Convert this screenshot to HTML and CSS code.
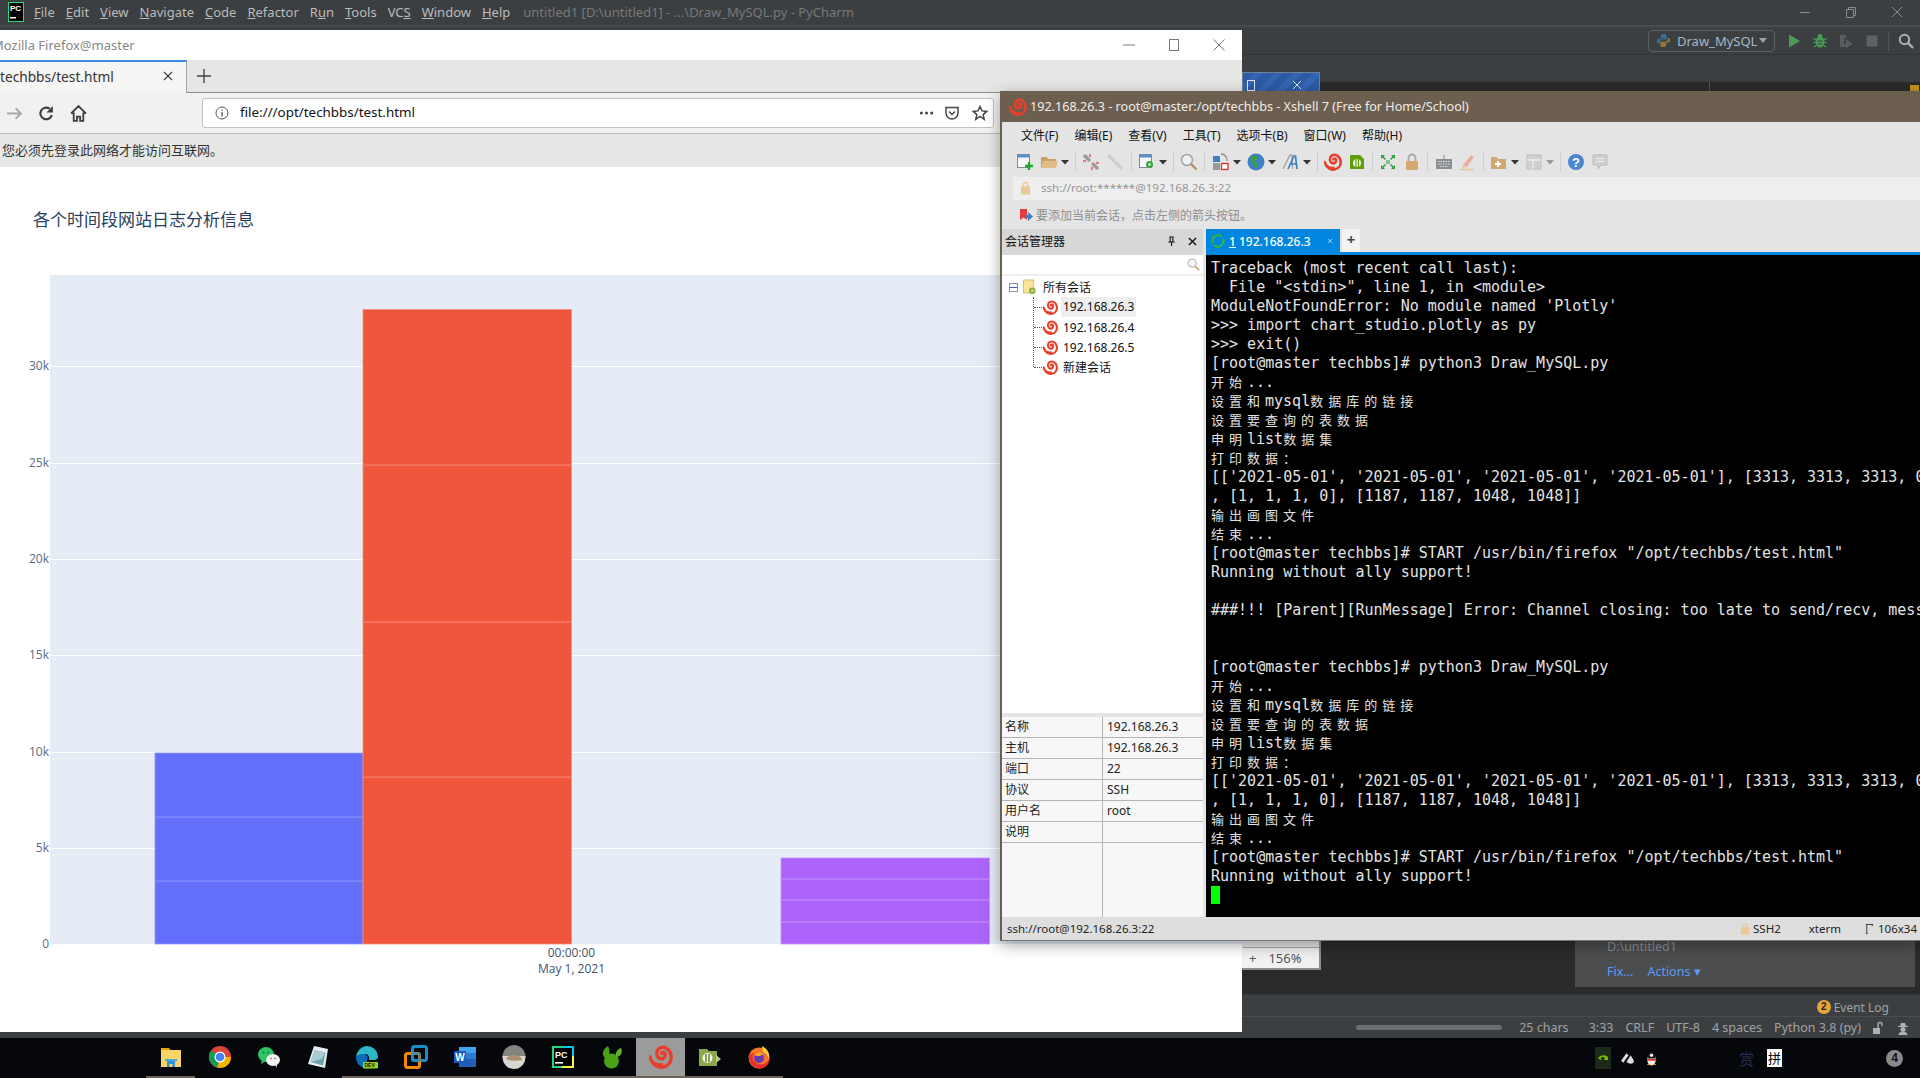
FILE: index.html
```html
<!DOCTYPE html>
<html lang="zh">
<head>
<meta charset="utf-8">
<title>Desktop</title>
<link rel="stylesheet" href="styles.css">
</head>
<body>
<svg class="defs" aria-hidden="true">
  <symbol id="spiral" viewBox="0 0 24 24">
    <path d="M1 12C3 20 9 23 14 22 20 21 23 16 22 10 21 4 15 1 11 3 7 5 7 11 10 13 13 15 17 13 16 9 15.500 7 13 7 12.500 8.500" fill="none" stroke="#e6402c" stroke-width="3.400" stroke-linecap="round"/>
    <path d="M1 12C4 17 9 19 14 18L14 22C8 24 2 19 1 12Z" fill="#e6402c"/>
  </symbol>
  <symbol id="caret" viewBox="0 0 8 8"><path d="M0 2h8L4 6.500Z" fill="#333"/></symbol>
</svg>

<div class="pycharm">
  <header class="pc-menubar">
    <svg class="pc-logo" viewBox="0 0 16 20"><rect x=".5" y=".5" width="15" height="19" fill="#000" stroke="#21d789"/><text x="2" y="9" class="pc-logo-text">PC</text><rect x="2" y="15" width="6" height="1.500" fill="#fff"/></svg>
    <nav class="pc-menu">
      <span><u>F</u>ile</span><span><u>E</u>dit</span><span><u>V</u>iew</span><span><u>N</u>avigate</span><span><u>C</u>ode</span><span><u>R</u>efactor</span><span>R<u>u</u>n</span><span><u>T</u>ools</span><span>VC<u>S</u></span><span><u>W</u>indow</span><span><u>H</u>elp</span>
    </nav>
    <span class="pc-title">untitled1 [D:\untitled1] - ...\Draw_MySQL.py - PyCharm</span>
    <div class="pc-winctl">
      <svg viewBox="0 0 12 12"><path d="M1 6.500h10" stroke="#8a8d8f"/></svg>
      <svg viewBox="0 0 12 12"><path d="M1.500 3.500h7v8h-7zM3.500 3V1.500h7v8H9" fill="none" stroke="#8a8d8f"/></svg>
      <svg viewBox="0 0 12 12"><path d="M1 1l10 10M11 1L1 11" stroke="#8a8d8f"/></svg>
    </div>
  </header>
  <div class="pc-toolbar">
    <div class="run-config">
      <svg class="py-icon" viewBox="0 0 16 16"><path d="M8 1C5 1 5 2.500 5 4v1.500h3.500V6H3C1.500 6 1 7 1 8.500S1.500 11 3 11h1.500V9c0-1.500 1-2 2.500-2h3c1 0 1.500-.5 1.500-1.500V3C11.500 1.500 10 1 8 1Z" fill="#3b6c93"/><path d="M8 15c3 0 3-1.500 3-3v-1.500H7.500V10H13c1.500 0 2-1 2-2.500S14.500 5 13 5h-.5v2c0 1.500-1 2-2.500 2H7c-1 0-2.500.5-2.500 1.500V13c0 1.500 1.500 2 3.500 2Z" fill="#8a7a35"/></svg>
      <span>Draw_MySQL</span>
      <svg class="run-caret" viewBox="0 0 10 6"><path d="M0 0h10L5 6Z" fill="#9da0a2"/></svg>
    </div>
    <svg class="pc-tool" viewBox="0 0 16 16"><path d="M3 1.500l11 6.500-11 6.500Z" fill="#499c54"/></svg>
    <svg class="pc-tool" viewBox="0 0 16 16"><ellipse cx="8" cy="9" rx="4.500" ry="5.500" fill="#499c54"/><circle cx="8" cy="3.500" r="2.500" fill="#499c54"/><path d="M1 5l3 2M15 5l-3 2M1 9.500h3M15 9.500h-3M1.500 14l3-2M14.500 14l-3-2" stroke="#499c54" stroke-width="1.200"/><path d="M5.500 8h5M5.500 11h5" stroke="#3c3f41"/></svg>
    <svg class="pc-tool" viewBox="0 0 16 16"><path d="M2 2h6v3H6v6h2v3H2Z" fill="#5a5d5f"/><path d="M8 6l7 5-7 4Z" fill="#5a5d5f"/></svg>
    <svg class="pc-tool" viewBox="0 0 16 16"><rect x="2.500" y="2.500" width="11" height="11" fill="#5f6163"/></svg>
    <i class="pc-sep"></i>
    <svg class="pc-tool" viewBox="0 0 16 16"><circle cx="6.500" cy="6.500" r="4.700" fill="none" stroke="#afb1b3" stroke-width="2"/><path d="M10 10l5 5" stroke="#afb1b3" stroke-width="2.400"/></svg>
  </div>
  <div class="pc-tabs"></div>
  <div class="pc-editor"><i class="pc-gutter"></i><i class="pc-warn"></i></div>
  <div class="pc-eventbar">
    <span class="event-badge">2</span><span>Event Log</span>
  </div>
  <div class="pc-status">
    <i class="pc-progress"></i>
    <span>25 chars</span><span class="gap-l">3:33</span><span>CRLF</span><span>UTF-8</span><span>4 spaces</span><span>Python 3.8 (py)</span>
    <svg class="pc-stat-icon" viewBox="0 0 14 14"><path d="M3 7h7v6H3z" fill="#afb1b3"/><path d="M8 7V3.500a2 2 0 0 1 4 0V5" fill="none" stroke="#afb1b3" stroke-width="1.400"/></svg>
    <svg class="pc-stat-icon" viewBox="0 0 14 14"><path d="M4 5l1-3h4l1 3h2v1H2V5Z" fill="#afb1b3"/><circle cx="7" cy="8.500" r="2.500" fill="#afb1b3"/><path d="M2.500 14c0-2.500 2-3 4.500-3s4.500.5 4.500 3Z" fill="#afb1b3"/></svg>
  </div>
</div>

<footer class="taskbar">
  <div class="task-icons">
    <div class="task running"><svg viewBox="0 0 24 24"><path d="M2 3h8l2 3H2Z" fill="#e5a50a"/><rect x="2" y="5" width="20" height="17" fill="#fbd466"/><path d="M8 22v-6h8v6h-2.500v-3h-3v3Z" fill="#2f8fd8"/><rect x="6" y="14" width="12" height="2" fill="#48a8ea"/></svg></div>
    <div class="task"><svg viewBox="0 0 24 24"><circle cx="12" cy="12" r="11" fill="#db4437"/><path d="M12 12L2.500 17.500A11 11 0 0 1 3 5.500Z" fill="#0f9d58"/><path d="M12 12h11A11 11 0 0 1 9 22.600Z" fill="#f4b400"/><path d="M12 12L2.500 17.500A11 11 0 0 0 9 22.600Z" fill="#0f9d58"/><circle cx="12" cy="12" r="5.500" fill="#fff"/><circle cx="12" cy="12" r="4.300" fill="#4285f4"/></svg></div>
    <div class="task"><svg viewBox="0 0 24 24"><ellipse cx="9" cy="9.500" rx="8" ry="7.500" fill="#2dc264"/><path d="M5 15l-1 4 4-2.500Z" fill="#2dc264"/><ellipse cx="16" cy="15" rx="7" ry="6" fill="#f2f2f2"/><path d="M18 20l2 3-.5-4Z" fill="#f2f2f2"/><circle cx="6.500" cy="7.500" r="1" fill="#137a3a"/><circle cx="11" cy="7.500" r="1" fill="#137a3a"/><circle cx="14" cy="13.500" r=".9" fill="#888"/><circle cx="18" cy="13.500" r=".9" fill="#888"/></svg></div>
    <div class="task"><svg viewBox="0 0 24 24"><path d="M8 1l14 3-3 19L2 19Z" fill="#e8eef0"/><path d="M8.500 5l11 2.500-2.500 13L4.500 17Z" fill="#6ea5ac"/><path d="M8.500 5l11 2.500-4 6.500L4.500 17Z" fill="#a9cdd2"/></svg></div>
    <div class="task running"><svg viewBox="0 0 24 24"><path d="M12 1a11 11 0 0 1 11 10.500c0 2-1.500 3.500-4 3.500h-5c1-3-1-6-4-6-4 0-8 2-9 3C2 6 6 1 12 1Z" fill="#2bb9c9"/><path d="M1 12c1-2 5-3.500 8-3 4 .5 4 3.500 3 6 0 3 3 6 6 6.500A11 11 0 0 1 1 12Z" fill="#0c6bb8"/><rect x="8" y="17" width="15" height="6.500" rx="1" fill="#8ed81c"/><text x="9.500" y="22.300" class="dev-text">DEV</text></svg></div>
    <div class="task running"><svg viewBox="0 0 24 24"><rect x="8.500" y="1.500" width="14" height="14" rx="2" fill="none" stroke="#1a8ccb" stroke-width="3"/><rect x="1.500" y="8.500" width="14" height="14" rx="2" fill="none" stroke="#f58a07" stroke-width="3"/><path d="M8.500 8.500h7v7h-7z" fill="none" stroke="#1a8ccb" stroke-width="2"/></svg></div>
    <div class="task running"><svg viewBox="0 0 24 24"><path d="M6 2h16a1 1 0 0 1 1 1v18a1 1 0 0 1-1 1H6Z" fill="#1f5fb5"/><path d="M6 8h17v6H6Z" fill="#2b7cd3"/><path d="M6 2h17v6H6Z" fill="#41a5ee"/><rect x="1" y="6" width="12" height="12" fill="#185abd"/><text x="2.300" y="15.800" class="word-text">W</text></svg></div>
    <div class="task running"><svg viewBox="0 0 24 24"><clipPath id="avatar-clip"><ellipse cx="12" cy="12" rx="11.500" ry="12"/></clipPath><g clip-path="url(#avatar-clip)"><rect width="24" height="12" fill="#84847f"/><rect y="11" width="24" height="13" fill="#d8d6d0"/><path d="M4 14c2-4 8-5 13-3 2 1 3 3 3 4-6 1-11 1-16-1Z" fill="#a98f6c"/></g></svg></div>
    <div class="task running"><svg viewBox="0 0 24 24"><path d="M1 1h22v22H1z" fill="#000"/><path d="M1 1h12v2H3v12H1Z" fill="#21d789"/><path d="M13 1h10v10h-2V3h-8Z" fill="#07c3f2"/><path d="M23 11v12H11v-2h10V11Z" fill="#fcf84a"/><path d="M11 23H1V13h2v8h8Z" fill="#21d789"/><text x="4" y="12.500" class="pc-big-text">PC</text><rect x="4" y="17" width="8" height="1.600" fill="#fff"/></svg></div>
    <div class="task running"><svg viewBox="0 0 24 24"><ellipse cx="11.500" cy="16" rx="7.500" ry="7.500" fill="#4aa016"/><path d="M5 13C1 9 3 4 8 1c2 4 2 9-1 12Z" fill="#4aa016"/><path d="M17 12c4-1 6-5 4-9-3 1-6 4-5 8Z" fill="#62b32a"/></svg></div>
    <div class="task running active"><svg viewBox="0 0 24 24"><use href="#spiral"/></svg></div>
    <div class="task running"><svg viewBox="0 0 24 24"><path d="M1 4h8l2 2h8v15H1Z" fill="#8aa84a"/><path d="M18 10l5 4-5 4Z" fill="#b7c98a"/><circle cx="9.500" cy="13" r="5" fill="#f4f4e8"/><path d="M8 9v8M11 9v8" stroke="#6f8a36" stroke-width="1.600"/></svg></div>
    <div class="task running"><svg viewBox="0 0 24 24"><circle cx="12" cy="13" r="10.500" fill="#f4762a"/><path d="M15 1c6 3 8 8 7 13-1-3-3-6-6-7Z" fill="#ffcd3c"/><path d="M2 10C1 16 5 23 12 23.500 19 24 23 18 22.500 13 20 20 12 21 8 17 5 14 5 10 8 8 5 8 3 9 2 10Z" fill="#e8312a"/><circle cx="12" cy="13" r="5" fill="#6a3ab5"/><path d="M8 9c2-2 6-2 8 0l-3 2H9Z" fill="#f4a62a"/></svg></div>
  </div>
  <div class="tray">
    <span class="tray-nv"><svg viewBox="0 0 12 12"><path d="M1 6c2-3 7-4 10-1v3H7c1-1 1-3-1-3S3 7 5 8c-2 0-3-1-4-2Z" fill="#76b900"/></svg></span>
    <svg class="tray-ic" viewBox="0 0 14 14"><path d="M1 9l5-7 2 2-5 7ZM6 10l4-6 3 5c0 3-4 4-7 1Z" fill="#ddd"/></svg>
    <svg class="tray-ic" viewBox="0 0 14 14"><ellipse cx="7" cy="8" rx="4" ry="5.500" fill="#eee"/><path d="M3.500 7c-.5-4 1-6.500 3.500-6.500s4 2.500 3.500 6.500Z" fill="#111"/><path d="M3 7.500h8v1.500H3Z" fill="#e21f1f"/><path d="M2.500 13h3l-1-1.500ZM11.500 13h-3l1-1.500Z" fill="#f5a623"/><circle cx="7" cy="4" r="1.600" fill="#eee"/></svg>
    <span class="tray-cube">赏</span>
    <span class="tray-ime">拼</span>
    <span class="tray-badge">4</span>
  </div>
</footer>

<div class="blue-peek"><i></i><svg viewBox="0 0 10 10"><path d="M1 1l8 8M9 1L1 9" stroke="#dfe6f2"/></svg></div>
<div class="zoom-peek"><span>+</span><span>156%</span></div>
<div class="notify-peek">
  <div class="notify-path">D:\untitled1</div>
  <div class="notify-links"><span>Fix...</span><span>Actions ▾</span></div>
</div>

<section class="firefox">
  <div class="ff-title">
    <span class="ff-title-text">Mozilla Firefox@master</span>
    <div class="ff-winctl">
      <svg viewBox="0 0 12 12"><path d="M0 6h12" stroke="#777"/></svg>
      <svg viewBox="0 0 12 12"><rect x="1.500" y=".5" width="9" height="11" fill="none" stroke="#777"/></svg>
      <svg viewBox="0 0 12 12"><path d="M.5.5l11 11M11.500.5l-11 11" stroke="#777"/></svg>
    </div>
  </div>
  <div class="ff-tabs">
    <div class="ff-tab"><span>techbbs/test.html</span>
      <svg viewBox="0 0 10 10"><path d="M1 1l8 8M9 1L1 9" stroke="#444" stroke-width="1.200"/></svg>
    </div>
    <svg class="ff-plus" viewBox="0 0 14 14"><path d="M7 0v14M0 7h14" stroke="#444" stroke-width="1.400"/></svg>
  </div>
  <div class="ff-nav">
    <svg class="ff-btn" viewBox="0 0 16 16"><path d="M1 8h13M9 3l5 5-5 5" fill="none" stroke="#a8a8a8" stroke-width="1.800"/></svg>
    <svg class="ff-btn" viewBox="0 0 16 16"><path d="M13 9.500A5.500 5.500 0 1 1 11 3.500" fill="none" stroke="#3d3d3d" stroke-width="2"/><path d="M14 1v6H8Z" fill="#3d3d3d"/></svg>
    <svg class="ff-btn" viewBox="0 0 16 16"><path d="M1 8l7-7 7 7M3.500 7v8h3v-4h3v4h3V7" fill="none" stroke="#3d3d3d" stroke-width="1.700"/></svg>
    <div class="ff-url">
      <svg class="ff-info" viewBox="0 0 14 14"><circle cx="7" cy="7" r="6" fill="none" stroke="#555"/><path d="M7 6v4.500M7 3.500v1.200" stroke="#555" stroke-width="1.300"/></svg>
      <span class="ff-url-text">file:///opt/techbbs/test.html</span>
      <svg class="ff-dots" viewBox="0 0 16 4"><circle cx="2.500" cy="2" r="1.600" fill="#444"/><circle cx="8" cy="2" r="1.600" fill="#444"/><circle cx="13.500" cy="2" r="1.600" fill="#444"/></svg>
      <svg class="ff-urlic" viewBox="0 0 16 16"><path d="M2 2.500h12V8A6 6 0 0 1 2 8Z" fill="none" stroke="#444" stroke-width="1.500"/><path d="M5 6.500l3 3 3-3" fill="none" stroke="#444" stroke-width="1.500"/></svg>
      <svg class="ff-urlic" viewBox="0 0 16 16"><path d="M8 1.500l2 4.400 4.700.5-3.500 3.200 1 4.700L8 11.500l-4.200 2.800 1-4.700L1.300 6.400 6 5.900Z" fill="none" stroke="#444" stroke-width="1.500"/></svg>
    </div>
  </div>
  <div class="ff-notice">您必须先登录此网络才能访问互联网。</div>
  <svg class="chart" viewBox="0 166 1242 864">
    <text x="33" y="225" class="chart-title">各个时间段网站日志分析信息</text>
    <rect x="50" y="274" width="1192" height="669" fill="#e5ecf6"/>
    <g stroke="#fff"><path d="M50 365.500H1242M50 462.500H1242M50 558.500H1242M50 654.500H1242M50 751.500H1242M50 847.500H1242"/></g>
    <g fill="#636efa" stroke="#8f97fb" stroke-width=".8">
      <rect x="155" y="880" width="208" height="63"/><rect x="155" y="816" width="208" height="64"/><rect x="155" y="752" width="208" height="64"/>
    </g>
    <g fill="#f0563c" stroke="#f58d7c" stroke-width=".8">
      <rect x="363" y="776" width="208.500" height="167"/><rect x="363" y="621" width="208.500" height="155"/><rect x="363" y="464" width="208.500" height="157"/><rect x="363" y="308.500" width="208.500" height="155.500"/>
    </g>
    <g fill="#ab63fa" stroke="#c695fb" stroke-width=".8">
      <rect x="781" y="921" width="208.500" height="22"/><rect x="781" y="899" width="208.500" height="22"/><rect x="781" y="878" width="208.500" height="21"/><rect x="781" y="857" width="208.500" height="21"/>
    </g>
    <g class="axis">
      <text x="49" y="369">30k</text><text x="49" y="466">25k</text><text x="49" y="562">20k</text><text x="49" y="658">15k</text><text x="49" y="755">10k</text><text x="49" y="851">5k</text><text x="49" y="947">0</text>
    </g>
    <g class="axis-x"><text x="571.500" y="956">00:00:00</text><text x="571.500" y="972">May 1, 2021</text></g>
  </svg>
</section>

<section class="xshell">
  <div class="xs-title"><svg viewBox="0 0 24 24"><use href="#spiral"/></svg><span>192.168.26.3 - root@master:/opt/techbbs - Xshell 7 (Free for Home/School)</span></div>
  <div class="xs-menu"><span>文件(F)</span><span>编辑(E)</span><span>查看(V)</span><span>工具(T)</span><span>选项卡(B)</span><span>窗口(W)</span><span>帮助(H)</span></div>
  <div class="xs-toolbar">
    <svg class="ti" viewBox="0 0 18 18"><rect x="1.500" y="1.500" width="12" height="13" fill="#f7f7f7" stroke="#7f8b99"/><rect x="1.500" y="1.500" width="12" height="3" fill="#5b8fc9"/><path d="M13 9v8M9 13h8" stroke="#22a82e" stroke-width="2.400"/></svg>
    <svg class="ti" viewBox="0 0 18 18"><path d="M1 4h6l1 2h8v9H1Z" fill="#c9a068"/><path d="M3 8h15l-2 7H1Z" fill="#e2bd85"/></svg>
    <svg class="tc" viewBox="0 0 8 8"><use href="#caret"/></svg>
    <i class="ts"></i>
    <svg class="ti" viewBox="0 0 18 18"><path d="M3 3l4 4M11 11l4 4" stroke="#9b9b9b" stroke-width="3.500" stroke-linecap="round"/><path d="M8 1v3M1 8h3M14 10h3M10 14v3" stroke="#e05050" stroke-width="1.500"/></svg>
    <svg class="ti" viewBox="0 0 18 18"><path d="M3 3l4.500 4.500M10.500 10.500L15 15" stroke="#cfcfcf" stroke-width="3.500" stroke-linecap="round"/><path d="M6 7l5 4" stroke="#cfcfcf" stroke-width="2"/></svg>
    <i class="ts"></i>
    <svg class="ti" viewBox="0 0 18 18"><rect x="1.500" y="1.500" width="12" height="13" fill="#f7f7f7" stroke="#7f8b99"/><rect x="1.500" y="1.500" width="12" height="3" fill="#5b8fc9"/><circle cx="11.500" cy="11.500" r="3.500" fill="#3ba63b"/><circle cx="11.500" cy="11.500" r="1.200" fill="#fff"/></svg>
    <svg class="tc" viewBox="0 0 8 8"><use href="#caret"/></svg>
    <i class="ts"></i>
    <svg class="ti" viewBox="0 0 18 18"><circle cx="7" cy="7" r="5.500" fill="#eef1f2" stroke="#a3a3a3" stroke-width="1.500"/><path d="M11 11l5.500 5.500" stroke="#b58c55" stroke-width="2.400"/></svg>
    <i class="ts"></i>
    <svg class="ti" viewBox="0 0 18 18"><rect x="1" y="3" width="7" height="6" fill="#3f7fc4"/><rect x="1" y="10" width="7" height="7" fill="#9a9a9a"/><rect x="9.500" y="10.500" width="6.500" height="6" fill="#fff" stroke="#e03030" stroke-width="1.300"/><path d="M9 1a6 6 0 0 1 6 7" fill="none" stroke="#8a8a8a" stroke-width="1.300"/></svg>
    <svg class="tc" viewBox="0 0 8 8"><use href="#caret"/></svg>
    <svg class="ti" viewBox="0 0 18 18"><circle cx="9" cy="9" r="8.500" fill="#3f7fc4"/><path d="M5 3c3-1 5 0 6 2-1 3-3 1-3 4 0 2 3 1 3 5-2 2-3 0-4-2-1-3-4-3-3-6Z" fill="#3ba03f"/></svg>
    <svg class="tc" viewBox="0 0 8 8"><use href="#caret"/></svg>
    <svg class="ti" viewBox="0 0 18 18"><path d="M1 16L8 2h2l.5 14" fill="none" stroke="#a0a0a0" stroke-width="1.300"/><path d="M6 16L12 3h1.500L15 16M8 11h6.500" fill="none" stroke="#3f7fc4" stroke-width="1.700"/></svg>
    <svg class="tc" viewBox="0 0 8 8"><use href="#caret"/></svg>
    <i class="ts"></i>
    <svg class="ti" viewBox="0 0 24 24"><use href="#spiral"/></svg>
    <svg class="ti" viewBox="0 0 18 18"><path d="M2 2h10l4 4v10H2Z" fill="#5f9e0a"/><circle cx="9" cy="10" r="4" fill="#f2f6e4"/><path d="M8 6v8M10.500 6v8" stroke="#5f9e0a" stroke-width="1.200"/></svg>
    <i class="ts"></i>
    <svg class="ti" viewBox="0 0 18 18"><path d="M2 2l4 0-1.500 1.500L7 6 6 7 3.500 4.500 2 6ZM16 2v4l-1.500-1.500L12 7l-1-1 2.500-2.500L12 2ZM2 16v-4l1.500 1.500L6 11l1 1-2.500 2.500L6 16ZM16 16h-4l1.500-1.500L11 12l1-1 2.500 2.500L16 12Z" fill="#2a9d3a"/><rect x="7" y="7" width="4" height="4" fill="#7fc78a"/></svg>
    <svg class="ti" viewBox="0 0 18 18"><rect x="3" y="8" width="12" height="9" rx="1" fill="#d4a870"/><path d="M5.500 8V5a3.500 3.500 0 0 1 7 0v3" fill="none" stroke="#a9a9a9" stroke-width="1.800"/></svg>
    <i class="ts"></i>
    <svg class="ti" viewBox="0 0 18 18"><rect x="1" y="6" width="16" height="10" rx="1" fill="#8a8f94"/><path d="M3 8.500h12M3 11h12M5 13.500h8" stroke="#dcdcdc" stroke-dasharray="1.500 1"/><path d="M9 6V2" stroke="#8a8f94"/></svg>
    <svg class="ti" viewBox="0 0 18 18"><path d="M4 12L12 2l3 2-7 10Z" fill="#e8b0a0"/><path d="M4 12l-1 3 4-1Z" fill="#e8c28f"/><path d="M1 16.500h14" stroke="#e8c28f" stroke-width="1.400"/></svg>
    <i class="ts"></i>
    <svg class="ti" viewBox="0 0 18 18"><path d="M1 4h6l1 2h8v10H1Z" fill="#d3a770"/><path d="M8 8v6M5 11h6" stroke="#fff" stroke-width="1.800"/></svg>
    <svg class="tc" viewBox="0 0 8 8"><use href="#caret"/></svg>
    <svg class="ti" viewBox="0 0 18 18"><rect x="2" y="2" width="14" height="14" fill="#d0d0d0" stroke="#bdbdbd"/><path d="M2 7h14M8 7v9" stroke="#eee" stroke-width="1.300"/></svg>
    <svg class="tc tc-dim" viewBox="0 0 8 8"><path d="M0 2h8L4 6.500Z" fill="#999"/></svg>
    <i class="ts"></i>
    <svg class="ti" viewBox="0 0 18 18"><circle cx="9" cy="9" r="8" fill="#4a86cf"/><text x="9" y="13.500" class="help-text">?</text></svg>
    <svg class="ti" viewBox="0 0 18 18"><path d="M2 2h14v10H10l-3 4v-4H2Z" fill="#d0d0d0" stroke="#bdbdbd"/><path d="M5 5.500h8M5 8.500h8" stroke="#eee"/></svg>
  </div>
  <div class="xs-address">
    <svg viewBox="0 0 12 14"><rect x="1" y="5" width="10" height="9" rx="1" fill="#e9c998"/><path d="M3.500 5V3.500a2.500 2.500 0 0 1 5 0V5" fill="none" stroke="#e9c998" stroke-width="1.500"/></svg>
    <span>ssh://root:******@192.168.26.3:22</span>
  </div>
  <div class="xs-hint">
    <svg viewBox="0 0 14 14"><path d="M1 1h7v11L4.500 9.500 1 12Z" fill="#e83a3a"/><path d="M6 7h3V4l5 4.500L9 13v-3H6Z" fill="#3f7fc4"/></svg>
    <span>要添加当前会话，点击左侧的箭头按钮。</span>
  </div>
  <div class="xs-main">
    <aside class="sessions">
      <div class="sess-head"><span>会话管理器</span>
        <svg class="sess-pin" viewBox="0 0 10 12"><path d="M2.500 1h5M3.500 1v5.500M6.500 1v5.500M1.500 6.500h7M5 6.500V11" stroke="#111" fill="none" stroke-width="1.200"/></svg>
        <svg class="sess-x" viewBox="0 0 10 10"><path d="M1 1l8 8M9 1L1 9" stroke="#111" stroke-width="1.500"/></svg>
      </div>
      <div class="sess-search"><svg viewBox="0 0 14 14"><circle cx="5.500" cy="5.500" r="4.300" fill="#f4f6f7" stroke="#bcbcbc" stroke-width="1.400"/><path d="M9 9l4 4" stroke="#c9a77a" stroke-width="1.800"/></svg></div>
      <div class="sess-tree">
        <div class="tree-root">
          <span class="tree-toggle"></span>
          <svg class="tree-folder" viewBox="0 0 14 16"><rect x=".5" y=".5" width="11" height="14" fill="#fbe39b" stroke="#d6bb6b"/><circle cx="10" cy="12" r="3.500" fill="#8cb04a"/><circle cx="10" cy="12" r="1.200" fill="#fbe39b"/></svg>
          <span>所有会话</span>
        </div>
        <div class="tree-children">
          <div class="tree-item selected-row"><svg viewBox="0 0 24 24"><use href="#spiral"/></svg><span class="selected">192.168.26.3</span></div>
          <div class="tree-item"><svg viewBox="0 0 24 24"><use href="#spiral"/></svg><span>192.168.26.4</span></div>
          <div class="tree-item"><svg viewBox="0 0 24 24"><use href="#spiral"/></svg><span>192.168.26.5</span></div>
          <div class="tree-item"><svg viewBox="0 0 24 24"><use href="#spiral"/></svg><span>新建会话</span></div>
        </div>
      </div>
      <div class="props">
        <span>名称</span><span>192.168.26.3</span>
        <span>主机</span><span>192.168.26.3</span>
        <span>端口</span><span>22</span>
        <span>协议</span><span>SSH</span>
        <span>用户名</span><span>root</span>
        <span>说明</span><span></span>
        <span class="props-fill"></span><span class="props-fill"></span>
      </div>
    </aside>
    <div class="term-pane">
      <div class="term-tabs">
        <div class="term-tab">
          <svg viewBox="0 0 14 14"><path d="M2 9A5.500 5.500 0 0 1 11 3" fill="none" stroke="#2fb344" stroke-width="2.200"/><path d="M12 5A5.500 5.500 0 0 1 3 11" fill="none" stroke="#2fb344" stroke-width="2.200"/></svg>
          <span><u>1</u> 192.168.26.3</span>
          <svg class="term-x" viewBox="0 0 8 8"><path d="M1 1l6 6M7 1L1 7" stroke="#bfe3fb"/></svg>
        </div>
        <div class="term-plus">+</div>
      </div>
      <pre class="term">Traceback (most recent call last):
  File "&lt;stdin&gt;", line 1, in &lt;module&gt;
ModuleNotFoundError: No module named 'Plotly'
&gt;&gt;&gt; import chart_studio.plotly as py
&gt;&gt;&gt; exit()
[root@master techbbs]# python3 Draw_MySQL.py
<span class="cjk">开始</span>...
<span class="cjk">设置和</span>mysql<span class="cjk">数据库的链接</span>
<span class="cjk">设置要查询的表数据</span>
<span class="cjk">申明</span>list<span class="cjk">数据集</span>
<span class="cjk">打印数据：</span>
[['2021-05-01', '2021-05-01', '2021-05-01', '2021-05-01'], [3313, 3313, 3313, 0], [8660, 8660, 8660, 0]
, [1, 1, 1, 0], [1187, 1187, 1048, 1048]]
<span class="cjk">输出画图文件</span>
<span class="cjk">结束</span>...
[root@master techbbs]# START /usr/bin/firefox "/opt/techbbs/test.html"
Running without ally support!

###!!! [Parent][RunMessage] Error: Channel closing: too late to send/recv, messages will be lost


[root@master techbbs]# python3 Draw_MySQL.py
<span class="cjk">开始</span>...
<span class="cjk">设置和</span>mysql<span class="cjk">数据库的链接</span>
<span class="cjk">设置要查询的表数据</span>
<span class="cjk">申明</span>list<span class="cjk">数据集</span>
<span class="cjk">打印数据：</span>
[['2021-05-01', '2021-05-01', '2021-05-01', '2021-05-01'], [3313, 3313, 3313, 0], [8660, 8660, 8660, 0]
, [1, 1, 1, 0], [1187, 1187, 1048, 1048]]
<span class="cjk">输出画图文件</span>
<span class="cjk">结束</span>...
[root@master techbbs]# START /usr/bin/firefox "/opt/techbbs/test.html"
Running without ally support!
<i class="cursor"></i></pre>
    </div>
  </div>
  <div class="xs-status">
    <span class="xs-status-addr">ssh://root@192.168.26.3:22</span>
    <svg class="xs-lock" viewBox="0 0 12 14"><rect x="1" y="5" width="10" height="9" rx="1" fill="#e9c998"/><path d="M3.500 5V3.500a2.500 2.500 0 0 1 5 0V5" fill="none" stroke="#e9c998" stroke-width="1.500"/></svg>
    <span class="xs-ssh">SSH2</span>
    <span class="xs-xterm">xterm</span>
    <svg class="xs-size-ic" viewBox="0 0 10 12"><path d="M2 1v10M1 1h8M8 1v2M1 11h2" stroke="#333" fill="none"/></svg>
    <span>106x34</span>
  </div>
</section>
</body>
</html>
```

FILE: styles.css
```css
* { box-sizing: border-box; }
html, body { margin: 0; height: 1078px; overflow: hidden; }
body {
  position: relative;
  display: flex;
  flex-direction: column;
  width: 1920px;
  background: #000;
  font-family: "Noto Sans", "Noto Sans CJK SC", sans-serif;
}
.defs { width: 0; height: 0; position: absolute; }

/* PyCharm background window */
.pycharm { flex: 1; display: flex; flex-direction: column; background: #3c3f41; color: #bbb; font-size: 13px; min-height: 0; }
.pc-menubar { height: 27px; display: flex; align-items: center; border-bottom: 2px solid #4a4c4e; padding: 0 0 1px 8px; }
.pc-logo { width: 16px; height: 20px; flex: none; }
.pc-logo-text { font: 700 8px "Liberation Sans", sans-serif; fill: #fff; }
.pc-menu { display: flex; gap: 11px; margin-left: 10px; color: #bbb; }
.pc-title { margin-left: 13px; color: #77797b; }
.pc-winctl { margin-left: auto; display: flex; gap: 34px; padding-right: 17px; }
.pc-winctl svg { width: 12px; height: 12px; }
.pc-toolbar { height: 28px; display: flex; align-items: center; justify-content: flex-end; padding-right: 6px; border-bottom: 1px solid #323537; }
.run-config { width: 127px; height: 22px; margin-right: 11px; display: flex; align-items: center; border: 1px solid #5e6163; border-radius: 4px; padding: 0 7px; font-size: 13px; color: #a9b7c6; }
.py-icon { width: 15px; height: 15px; margin-right: 6px; flex: none; }
.run-caret { width: 8px; height: 5px; margin-left: auto; }
.pc-tool { width: 16px; height: 16px; margin-right: 10px; flex: none; }
.pc-tool:last-child { margin-right: 0; }
.pc-sep { width: 1px; height: 20px; background: #515456; margin: 0 9px 0 -2px; }
.pc-tabs { height: 27px; background: #3c3f41; }
.pc-editor { flex: 1; position: relative; background: #2b2b2b; }
.pc-gutter { position: absolute; left: 1709px; top: 0; width: 1px; height: 10px; background: #555; }
.pc-warn { position: absolute; right: 1px; top: 3px; width: 9px; height: 6px; background: #be9117; }
.pc-eventbar { height: 22px; display: flex; align-items: center; justify-content: flex-end; padding: 3px 31px 0 0; border-top: 1px solid #353739; font-size: 12px; color: #a0a2a4; gap: 3px; }
.event-badge { width: 14px; height: 14px; border-radius: 50%; background: #e8a33d; color: #222; font: 700 10px/14px "Liberation Sans", sans-serif; text-align: center; }
.pc-status { height: 22px; display: flex; align-items: center; justify-content: flex-end; gap: 12px; padding-right: 10px; border-top: 1px solid #4a4c4e; font-size: 12.500px; color: #a0a2a4; }
.pc-progress { width: 146px; height: 5px; border-radius: 3px; background: #6b6e70; margin-right: 5px; }
.gap-l { margin-left: 8px; }
.pc-stat-icon { width: 14px; height: 14px; margin-left: -3px; }
.pc-stat-icon:last-child { margin-left: 0; }

/* Taskbar */
.taskbar { height: 40px; flex: none; display: flex; background: #05070a; position: relative; }
.task-icons { display: flex; margin-left: 146px; }
.task { width: 49px; height: 40px; display: flex; align-items: center; justify-content: center; padding-bottom: 1px; border-bottom: 2px solid transparent; background-clip: padding-box; }
.task svg { width: 24px; height: 24px; }
.task.running { border-bottom-color: #6d6258; }
.task.active { background: #9b9b9b; }
.dev-text { font: 700 5px "Liberation Sans", sans-serif; fill: #111; }
.word-text { font: 700 10px "Liberation Sans", sans-serif; fill: #fff; }
.pc-big-text { font: 700 9px "Liberation Sans", sans-serif; fill: #fff; }
.tray { margin-left: auto; display: flex; align-items: center; height: 40px; }
.tray-nv { width: 16px; height: 22px; background: #1b2a1b; display: flex; align-items: center; justify-content: center; margin-right: 9px; }
.tray-nv svg { width: 12px; height: 12px; }
.tray-ic { width: 15px; height: 15px; margin-right: 9px; }
.tray-cube { margin-left: 71px; width: 16px; color: #2a2d55; font-size: 15px; }
.tray-ime { margin-left: 12px; width: 15px; height: 18px; background: #fff; color: #000; font-size: 13px; line-height: 18px; text-align: center; }
.tray-badge { margin-left: 104px; margin-right: 17px; width: 17px; height: 17px; border-radius: 50%; background: #8a8a8a; color: #111; font: 700 12px/17px "Liberation Sans", sans-serif; text-align: center; }

/* Windows peeking between the main ones */
.blue-peek { position: absolute; left: 1242px; top: 72px; width: 78px; height: 19px; background: repeating-linear-gradient(135deg, #2c5ba5 0 8px, #3566b2 8px 14px); border: 1px solid #6f7f95; border-bottom: 0; display: flex; align-items: center; justify-content: flex-end; gap: 37px; padding: 6px 17px 0 0; }
.blue-peek i { width: 8px; height: 11px; border: 1px solid #dfe6f2; }
.blue-peek svg { width: 10px; height: 10px; }
.zoom-peek { position: absolute; left: 1242px; top: 941px; width: 79px; height: 29px; background: linear-gradient(#e6e6e6 0 6px, #a8a8a8 6px 7px, #f1f1f1 7px); border: 1px solid #8c8c8c; border-width: 0 2px 2px 0; display: flex; align-items: center; gap: 12px; padding: 7px 0 0 7px; font-size: 13px; color: #555; }
.notify-peek { position: absolute; left: 1575px; top: 941px; width: 340px; height: 46px; background: #4b4d4f; padding-left: 32px; font-size: 12.500px; }
.notify-path { color: #8a8c8e; line-height: 12px; }
.notify-links { display: flex; gap: 14px; margin-top: 10px; color: #589df6; }

/* Firefox */
.firefox { position: absolute; left: 0; top: 30px; width: 1242px; height: 1002px; background: #fff; display: flex; flex-direction: column; overflow: hidden; }
.ff-title { height: 30px; flex: none; display: flex; align-items: center; padding-bottom: 1px; }
.ff-title-text { margin-left: -8px; font-size: 13px; color: #878787; }
.ff-winctl { margin-left: auto; display: flex; gap: 33px; padding-right: 17px; }
.ff-winctl svg { width: 12px; height: 12px; }
.ff-tabs { height: 33px; flex: none; display: flex; align-items: center; background: #e6e6e4; border-bottom: 1px solid #8f8f8d; }
.ff-tab { width: 187px; height: 33px; display: flex; align-items: center; background: #f5f5f3; border-top: 2px solid #3b8be0; border-right: 1px solid #a5a5a3; margin-bottom: -1px; padding-bottom: 3px; font-size: 13.700px; color: #333; }
.ff-tab svg { width: 10px; height: 10px; margin-left: auto; margin-right: 13px; }
.ff-plus { width: 14px; height: 14px; margin-left: 10px; }
.ff-nav { height: 41px; flex: none; display: flex; align-items: center; background: #f1f1ef; border-bottom: 1px solid #bcbcba; padding-left: 6px; }
.ff-btn { width: 17px; height: 17px; margin-right: 15px; flex: none; }
.ff-url { width: 792px; height: 30px; display: flex; align-items: center; background: #fff; border: 1px solid #c0c0be; border-radius: 3px; padding: 0 5px 0 12px; font-size: 13.400px; color: #111; margin-left: 100px; }
.ff-url-text { padding-bottom: 2px; }
.ff-info { width: 14px; height: 14px; margin-right: 11px; }
.ff-dots { width: 15px; height: 4px; margin-left: auto; margin-right: 10px; }
.ff-urlic { width: 16px; height: 16px; margin-right: 12px; }
.ff-urlic:last-child { margin-right: 0; }
.ff-notice { height: 33px; flex: none; display: flex; align-items: center; padding: 0 0 3px 2px; background: #e7e7e5; font-size: 13px; color: #333; }
.chart { flex: none; width: 1242px; height: 864px; display: block; }
.chart-title { font: 17px "Open Sans", "Noto Sans CJK SC", sans-serif; fill: #2a3f5f; }
.axis text { font: 12px "Open Sans", sans-serif; fill: #5a6b85; text-anchor: end; }
.axis-x text { font: 12px "Open Sans", sans-serif; fill: #41526e; text-anchor: middle; }

/* Xshell */
.xshell { position: absolute; left: 1000px; top: 91px; width: 920px; height: 850px; background: #e4e4e4; border-left: 2px solid #6d5f50; border-bottom: 1px solid #777; display: flex; flex-direction: column; box-shadow: 0 4px 14px rgba(0, 0, 0, .35); overflow: hidden; }
.xs-title { height: 31px; flex: none; background: #6d5f50; display: flex; align-items: center; padding-left: 7px; color: #f0ede8; font-size: 12.600px; gap: 3px; }
.xs-title svg { width: 18px; height: 18px; }
.xs-menu { height: 28px; flex: none; display: flex; align-items: center; gap: 16px; padding: 0 0 2px 19px; font-size: 12px; color: #111; }
.xs-toolbar { height: 27px; flex: none; display: flex; align-items: center; padding: 0 0 4px 11px; }
.ti { width: 18px; height: 18px; margin: 0 3px; flex: none; }
.tc { width: 8px; height: 8px; margin-right: 3px; flex: none; }
.ts { width: 1px; height: 20px; background: #cfcfcf; margin: 0 3.200px; flex: none; }
.help-text { font: 700 13px "Liberation Sans", sans-serif; fill: #fff; text-anchor: middle; }
.xs-address { height: 23px; flex: none; margin-left: 11px; background: #eee; display: flex; align-items: center; padding: 0 0 2px 7px; gap: 10px; font-size: 11.600px; color: #959595; }
.xs-address svg { width: 11px; height: 14px; }
.xs-hint { height: 29px; flex: none; display: flex; align-items: center; padding: 1px 0 0 17px; gap: 3px; font-size: 12px; color: #8f8f8f; }
.xs-hint svg { width: 14px; height: 14px; }
.xs-main { flex: 1; min-height: 0; display: flex; }
.sessions { width: 201px; flex: none; display: flex; flex-direction: column; background: #fff; }
.sess-head { height: 26px; flex: none; background: #d7d7d7; display: flex; align-items: center; padding: 0 0 2px 3px; font-size: 12px; color: #111; }
.sess-pin { width: 9px; height: 11px; margin-left: auto; }
.sess-x { width: 9px; height: 9px; margin: 0 6px 0 12px; }
.sess-search { height: 21px; flex: none; display: flex; align-items: center; justify-content: flex-end; padding-right: 3px; border-bottom: 2px solid #eee; }
.sess-search svg { width: 13px; height: 13px; }
.sess-tree { flex: 1; padding-top: 1px; font-size: 12px; color: #111; }
.tree-root { height: 20px; display: flex; align-items: center; padding-left: 7px; position: relative; margin-top: 0; }
.tree-toggle { width: 9px; height: 9px; border: 1px solid #8a93a5; background: linear-gradient(#fff 0 3px, #3a5da8 3px 4px, #fff 4px); flex: none; }
.tree-folder { width: 13px; height: 16px; margin: 0 7px 0 5px; flex: none; }
.tree-children { margin-left: 31px; border-left: 1px dotted #555; height: 70px; }
.tree-item { height: 20px; display: flex; align-items: center; position: relative; padding-left: 9px; white-space: nowrap; }
.tree-item svg { width: 15px; height: 15px; margin-right: 5px; flex: none; }
.tree-item::before { content: ""; width: 10px; border-top: 1px dotted #555; position: absolute; left: 0; top: 10px; }
.selected { background: #eee; line-height: 20px; padding: 0 2px; margin-left: -2px; }
.props { height: 204px; flex: none; display: grid; grid-template-columns: 101px 100px; grid-template-rows: repeat(6, 21px) 1fr; background: #f7f7f7; border-top: 4px solid #e5e5e5; font-size: 12px; color: #222; }
.props span { padding-left: 3px; line-height: 20px; border-bottom: 1px solid #b5b5b5; white-space: nowrap; }
.props span:nth-child(2n + 1) { border-right: 1px solid #b5b5b5; }
.props span:nth-child(2n) { padding-left: 4px; }
.props .props-fill { border-bottom: 0; }
.term-pane { flex: 1; min-width: 0; display: flex; flex-direction: column; margin-left: 3px; }
.term-tabs { height: 26px; flex: none; display: flex; border-bottom: 3px solid #0086de; background: #e4e4e4; }
.term-tab { width: 134px; height: 23px; background: #0086de; display: flex; align-items: center; padding: 1px 0 0 5px; color: #fff; font-size: 12px; font-weight: 500; gap: 4px; }
.term-tab svg { width: 14px; height: 14px; flex: none; }
.term-tab .term-x { width: 6px; height: 6px; margin-left: auto; margin-right: 7px; }
.term-plus { width: 18px; height: 23px; margin-left: 2px; background: #f3f3f3; color: #444; font-size: 15px; font-weight: 700; line-height: 21px; text-align: center; }
.term { flex: 1; margin: 0; padding: 4px 0 0 5px; background: #000; color: #e2e2e2; font: 15px/19px "DejaVu Sans Mono", monospace; white-space: pre; overflow: hidden; }
.cjk { font-family: "Noto Sans CJK SC", sans-serif; font-size: 13px; line-height: 0; letter-spacing: 5px; }
.cursor { display: inline-block; width: 9px; height: 18px; background: #00ff00; vertical-align: top; }
.xs-status { height: 23px; flex: none; background: #dedede; display: flex; align-items: center; padding-right: 3px; font-size: 11.500px; color: #222; }
.xs-status-addr { margin-left: 5px; margin-right: auto; }
.xs-lock { width: 10px; height: 12px; margin-right: 3px; }
.xs-ssh { margin-right: 28px; }
.xs-xterm { margin-right: 24px; }
.xs-size-ic { width: 9px; height: 12px; margin-right: 4px; }
```
